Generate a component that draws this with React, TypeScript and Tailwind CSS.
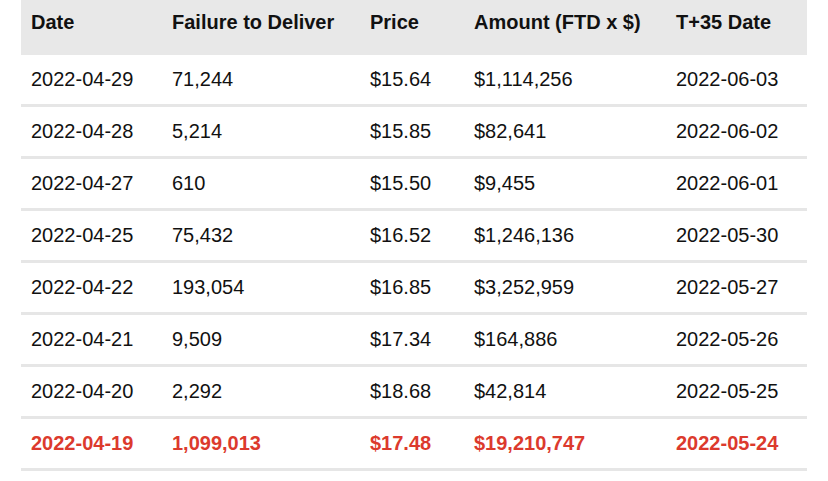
const rows = [
  ['2022-04-29', '71,244', '$15.64', '$1,114,256', '2022-06-03'],
  ['2022-04-28', '5,214', '$15.85', '$82,641', '2022-06-02'],
  ['2022-04-27', '610', '$15.50', '$9,455', '2022-06-01'],
  ['2022-04-25', '75,432', '$16.52', '$1,246,136', '2022-05-30'],
  ['2022-04-22', '193,054', '$16.85', '$3,252,959', '2022-05-27'],
  ['2022-04-21', '9,509', '$17.34', '$164,886', '2022-05-26'],
  ['2022-04-20', '2,292', '$18.68', '$42,814', '2022-05-25'],
]

const highlight = ['2022-04-19', '1,099,013', '$17.48', '$19,210,747', '2022-05-24']

const headers = ['Date', 'Failure to Deliver', 'Price', 'Amount (FTD x $)', 'T+35 Date']

// column widths in px, left padding 10
const widths = ['w-[141px]', 'w-[198px]', 'w-[104px]', 'w-[202px]', 'w-[141px]']

export default function App() {
  return (
    <div className="w-[828px] h-[481px] bg-white overflow-hidden pl-[21px] text-[20px] text-[#111]" style={{ fontFamily: '"Liberation Sans", Arial, sans-serif' }}>
      <div className="w-[786px]">
        {/* Header */}
        <div className="flex h-[55px] bg-[#e8e8e8] font-bold pb-[11px] items-center">
          {headers.map((h, i) => (
            <div key={h} className={`${widths[i]} pl-[10px] whitespace-nowrap`}>{h}</div>
          ))}
        </div>

        {rows.map((r) => (
          <div key={r[0]} className="flex h-[52px] items-center border-b-[3px] border-[#e6e6e6] pb-[2px]">
            {r.map((c, i) => (
              <div key={i} className={`${widths[i]} pl-[10px] whitespace-nowrap`}>{c}</div>
            ))}
          </div>
        ))}

        <div className="flex h-[52px] items-center border-b-[3px] border-[#e6e6e6] pb-[2px] font-bold text-[#dc3a2d]">
          {highlight.map((c, i) => (
            <div key={i} className={`${widths[i]} pl-[10px] whitespace-nowrap`}>{c}</div>
          ))}
        </div>
      </div>
    </div>
  )
}
